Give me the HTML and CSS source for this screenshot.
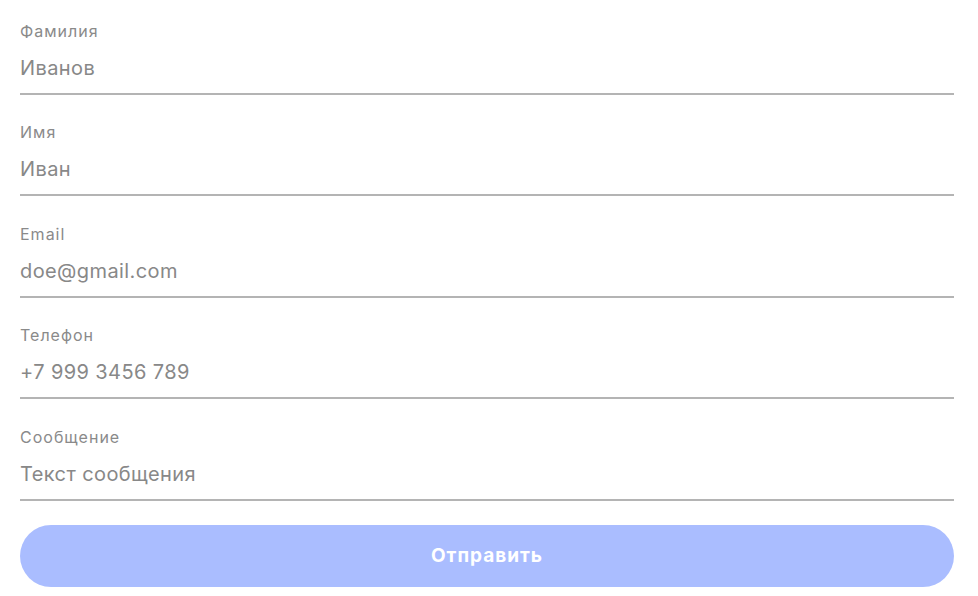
FILE: index.html
```html
<!DOCTYPE html>
<html lang="ru">
<head>
  <meta charset="UTF-8">
  <meta name="viewport" content="width=device-width, initial-scale=1.0">
  <title>Форма обратной связи</title>
  <link rel="stylesheet" href="styles.css">
</head>
<body>

  <form class="feedback-form">
    <div class="field">
      <label for="lastName">Фамилия</label>
      <input type="text" id="lastName" placeholder="Иванов">
    </div>
    <div class="field">
      <label for="firstName">Имя</label>
      <input type="text" id="firstName" placeholder="Иван">
    </div>
    <div class="field">
      <label for="email">Email</label>
      <input type="email" id="email" placeholder="doe@gmail.com">
    </div>
    <div class="field">
      <label for="phone">Телефон</label>
      <input type="tel" id="phone" placeholder="+7 999 3456 789">
    </div>
    <div class="field">
      <label for="message">Сообщение</label>
      <input type="text" id="message" placeholder="Текст сообщения">
    </div>
    <button type="submit">Отправить</button>
  </form>

</body>
</html>
```

FILE: styles.css
```css
body {
  margin: 0;
  padding: 0;
  background: #fff;
  font-family: Inter, "Noto Sans", sans-serif;
}

.feedback-form {
  width: 934px;
  padding: 22px 20px 0;
}

.field {
  display: flex;
  flex-direction: column;
  border-bottom: 2px solid #b4b4b4;
  margin-bottom: 28.4px;
}

.field label {
  font-size: 16px;
  line-height: 18px;
  letter-spacing: 1px;
  color: #8a8a8a;
  margin-bottom: 15px;
}

.field input {
  border: none;
  outline: none;
  padding: 0 0 12px;
  font-family: inherit;
  font-size: 20px;
  line-height: 26px;
  letter-spacing: 0.4px;
  color: #808080;
  background: transparent;
}

.field input::placeholder {
  color: #888;
}

button {
  display: block;
  width: 100%;
  height: 62px;
  margin-top: -4px;
  border: none;
  border-radius: 31px;
  background: #aabdff;
  color: #fff;
  font-family: inherit;
  font-size: 19px;
  font-weight: 700;
  letter-spacing: 1px;
  cursor: pointer;
}
```
